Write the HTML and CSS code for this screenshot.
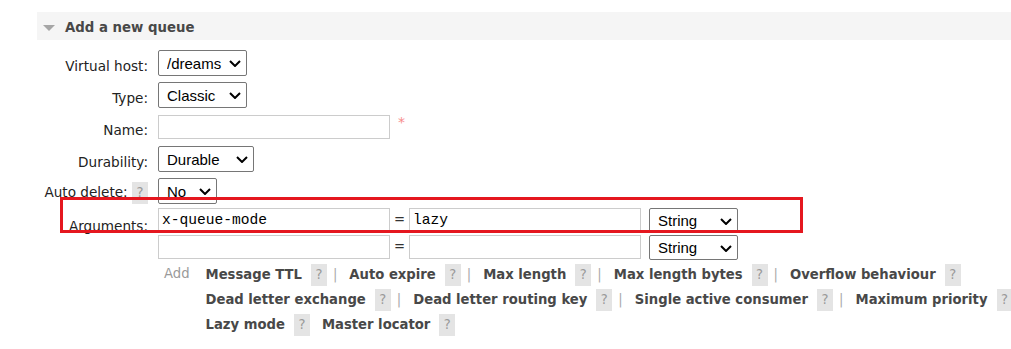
FILE: index.html
```html
<!DOCTYPE html>
<html lang="en">
<head>
  <meta charset="UTF-8">
  <title>Add a new queue</title>
  <link rel="stylesheet" href="styles.css">
</head>
<body>
<div class="page">
  <div class="section-head">
    <span class="arrow"></span>
    <h2>Add a new queue</h2>
  </div>

  <div class="form">
    <div class="row">
      <label class="lbl">Virtual host:</label>
      <span class="sel-wrap">
        <select class="sel w-89"><option>/dreams</option></select>
        <svg class="chev" width="12" height="7" viewBox="0 0 12 7"><path d="M1 1 L6 6 L11 1"/></svg>
      </span>
    </div>
    <div class="row">
      <label class="lbl">Type:</label>
      <span class="sel-wrap">
        <select class="sel w-89"><option>Classic</option><option>Quorum</option></select>
        <svg class="chev" width="12" height="7" viewBox="0 0 12 7"><path d="M1 1 L6 6 L11 1"/></svg>
      </span>
    </div>
    <div class="row">
      <label class="lbl">Name:</label>
      <input class="txt" type="text">
      <span class="mand">*</span>
    </div>
    <div class="row">
      <label class="lbl">Durability:</label>
      <span class="sel-wrap">
        <select class="sel w-96"><option>Durable</option><option>Transient</option></select>
        <svg class="chev" width="12" height="7" viewBox="0 0 12 7"><path d="M1 1 L6 6 L11 1"/></svg>
      </span>
    </div>
    <div class="row row-auto">
      <label class="lbl">Auto delete: <span class="help">?</span></label>
      <span class="sel-wrap">
        <select class="sel w-59"><option>No</option><option>Yes</option></select>
        <svg class="chev" width="12" height="7" viewBox="0 0 12 7"><path d="M1 1 L6 6 L11 1"/></svg>
      </span>
    </div>
    <div class="row row-args">
      <label class="lbl">Arguments:</label>
      <div class="arg-list">
        <div class="arg">
          <input class="txt mono" type="text" value="x-queue-mode">
          <span class="eq">=</span>
          <input class="txt mono" type="text" value="lazy">
          <span class="sel-wrap">
            <select class="sel w-89"><option>String</option><option>Number</option><option>Boolean</option><option>List</option></select>
            <svg class="chev" width="12" height="7" viewBox="0 0 12 7"><path d="M1 1 L6 6 L11 1"/></svg>
          </span>
        </div>
        <div class="arg">
          <input class="txt mono" type="text">
          <span class="eq">=</span>
          <input class="txt mono" type="text">
          <span class="sel-wrap">
            <select class="sel w-89"><option>String</option><option>Number</option><option>Boolean</option><option>List</option></select>
            <svg class="chev" width="12" height="7" viewBox="0 0 12 7"><path d="M1 1 L6 6 L11 1"/></svg>
          </span>
        </div>
      </div>
    </div>
  </div>

  <div class="add">
    <span class="add-label">Add</span>
    <div class="add-links">
      <div class="line">
        <a class="arg-link">Message TTL</a><span class="help">?</span><span class="sep">|</span>
        <a class="arg-link">Auto expire</a><span class="help">?</span><span class="sep">|</span>
        <a class="arg-link">Max length</a><span class="help">?</span><span class="sep">|</span>
        <a class="arg-link">Max length bytes</a><span class="help">?</span><span class="sep">|</span>
        <a class="arg-link">Overflow behaviour</a><span class="help">?</span>
      </div>
      <div class="line">
        <a class="arg-link">Dead letter exchange</a><span class="help">?</span><span class="sep">|</span>
        <a class="arg-link">Dead letter routing key</a><span class="help">?</span><span class="sep">|</span>
        <a class="arg-link">Single active consumer</a><span class="help">?</span><span class="sep">|</span>
        <a class="arg-link">Maximum priority</a><span class="help">?</span>
      </div>
      <div class="line">
        <a class="arg-link">Lazy mode</a><span class="help">?</span>
        <a class="arg-link lazy-next">Master locator</a><span class="help">?</span>
      </div>
    </div>
  </div>

  <!-- red annotation box drawn over the first argument row -->
  <div class="highlight"></div>
</div>
</body>
</html>
```

FILE: styles.css
```css
/* styles */
body {
  margin: 0;
  font-family: "DejaVu Sans", Verdana, sans-serif;
  font-size: 13.2px;
  color: #333;
  background: #fff;
  overflow: hidden;
}

.page {
  position: relative;
  width: 1011px;
  height: 349px;
  padding-top: 12px;
  box-sizing: border-box;
}

.section-head {
  display: flex;
  align-items: center;
  margin-left: 37px;
  height: 28px;
  background: #f5f5f5;
}

.section-head .arrow {
  width: 0;
  height: 0;
  margin-top: 3px;
  margin-left: 6px;
  margin-right: 10px;
  border-left: 6px solid transparent;
  border-right: 6px solid transparent;
  border-top: 6px solid #a6a6a6;
}

.section-head h2 {
  margin: 0;
  padding-top: 3px;
  font-size: 13.3px;
  font-weight: bold;
  color: #484848;
}

.form {
  display: flex;
  flex-direction: column;
  gap: 6px;
  margin-top: 10px;
}

.row {
  display: flex;
  align-items: flex-start;
  height: 26px;
}

.lbl {
  flex-shrink: 0;
  width: 148px;
  margin-right: 10px;
  padding-top: 8px;
  line-height: 16px;
  font-size: 13.6px;
  text-align: right;
  color: #222;
}

.row-auto .lbl {
  padding-top: 4px;
}

.row-args {
  height: auto;
  margin-top: -2px;
}

.row-args .lbl {
  padding-top: 10px;
}

.sel-wrap {
  position: relative;
  display: inline-flex;
}

.sel {
  -webkit-appearance: none;
  appearance: none;
  height: 26px;
  padding: 0 20px 0 8px;
  font-family: "Liberation Sans", Arial, sans-serif;
  font-size: 15px;
  color: #000;
  background: #fff;
  border: 1px solid #767676;
  border-radius: 2px;
}

.chev {
  position: absolute;
  right: 6px;
  top: 50%;
  margin-top: -3px;
  pointer-events: none;
  fill: none;
  stroke: #000;
  stroke-width: 2;
}

.w-89 { width: 89px; }
.w-96 { width: 96px; }
.w-59 { width: 59px; }

.txt {
  width: 232px;
  height: 24px;
  box-sizing: border-box;
  padding: 0 3px;
  margin: 1px 0 0;
  border: 1px solid #ccc;
  background: #fff;
  font-family: "Liberation Mono", "Courier New", monospace;
  font-size: 14.6px;
  color: #000;
}

.mand {
  margin-left: 8px;
  margin-top: 0;
  color: #f78b8b;
  font-size: 14px;
}

.arg-list {
  display: flex;
  flex-direction: column;
  gap: 2px;
}

.arg {
  display: flex;
  align-items: flex-start;
  height: 25px;
}

.arg .txt {
  margin-top: 0;
}

.arg .sel-wrap {
  margin-left: 8px;
}

.arg .sel {
  height: 25px;
}

.eq {
  width: 19px;
  text-align: center;
  line-height: 24px;
  color: #333;
}

.help {
  display: inline-block;
  width: 16px;
  height: 22px;
  line-height: 22px;
  text-align: center;
  vertical-align: middle;
  background: #e4e4e4;
  color: #9a9a9a;
  font-size: 13.2px;
  font-weight: normal;
}

.add {
  display: flex;
  margin-top: 2px;
  padding-left: 164px;
}

.add-label {
  width: 26px;
  margin-right: 16px;
  padding-top: 2px;
  line-height: 20px;
  color: #9a9a9a;
}

.line {
  display: flex;
  align-items: center;
  height: 25px;
  white-space: nowrap;
}

.arg-link {
  font-weight: bold;
  color: #484848;
  cursor: pointer;
}

.line .help {
  margin-left: 9px;
  margin-right: 10px;
}

.line .lazy-next {
  margin-left: 2px;
}

.line .sep {
  color: #aaa;
  margin-left: -4px;
  margin-right: 12px;
}

.highlight {
  position: absolute;
  left: 60px;
  top: 197px;
  width: 743px;
  height: 36px;
  box-sizing: border-box;
  border: 3px solid #e5171f;
}
```
